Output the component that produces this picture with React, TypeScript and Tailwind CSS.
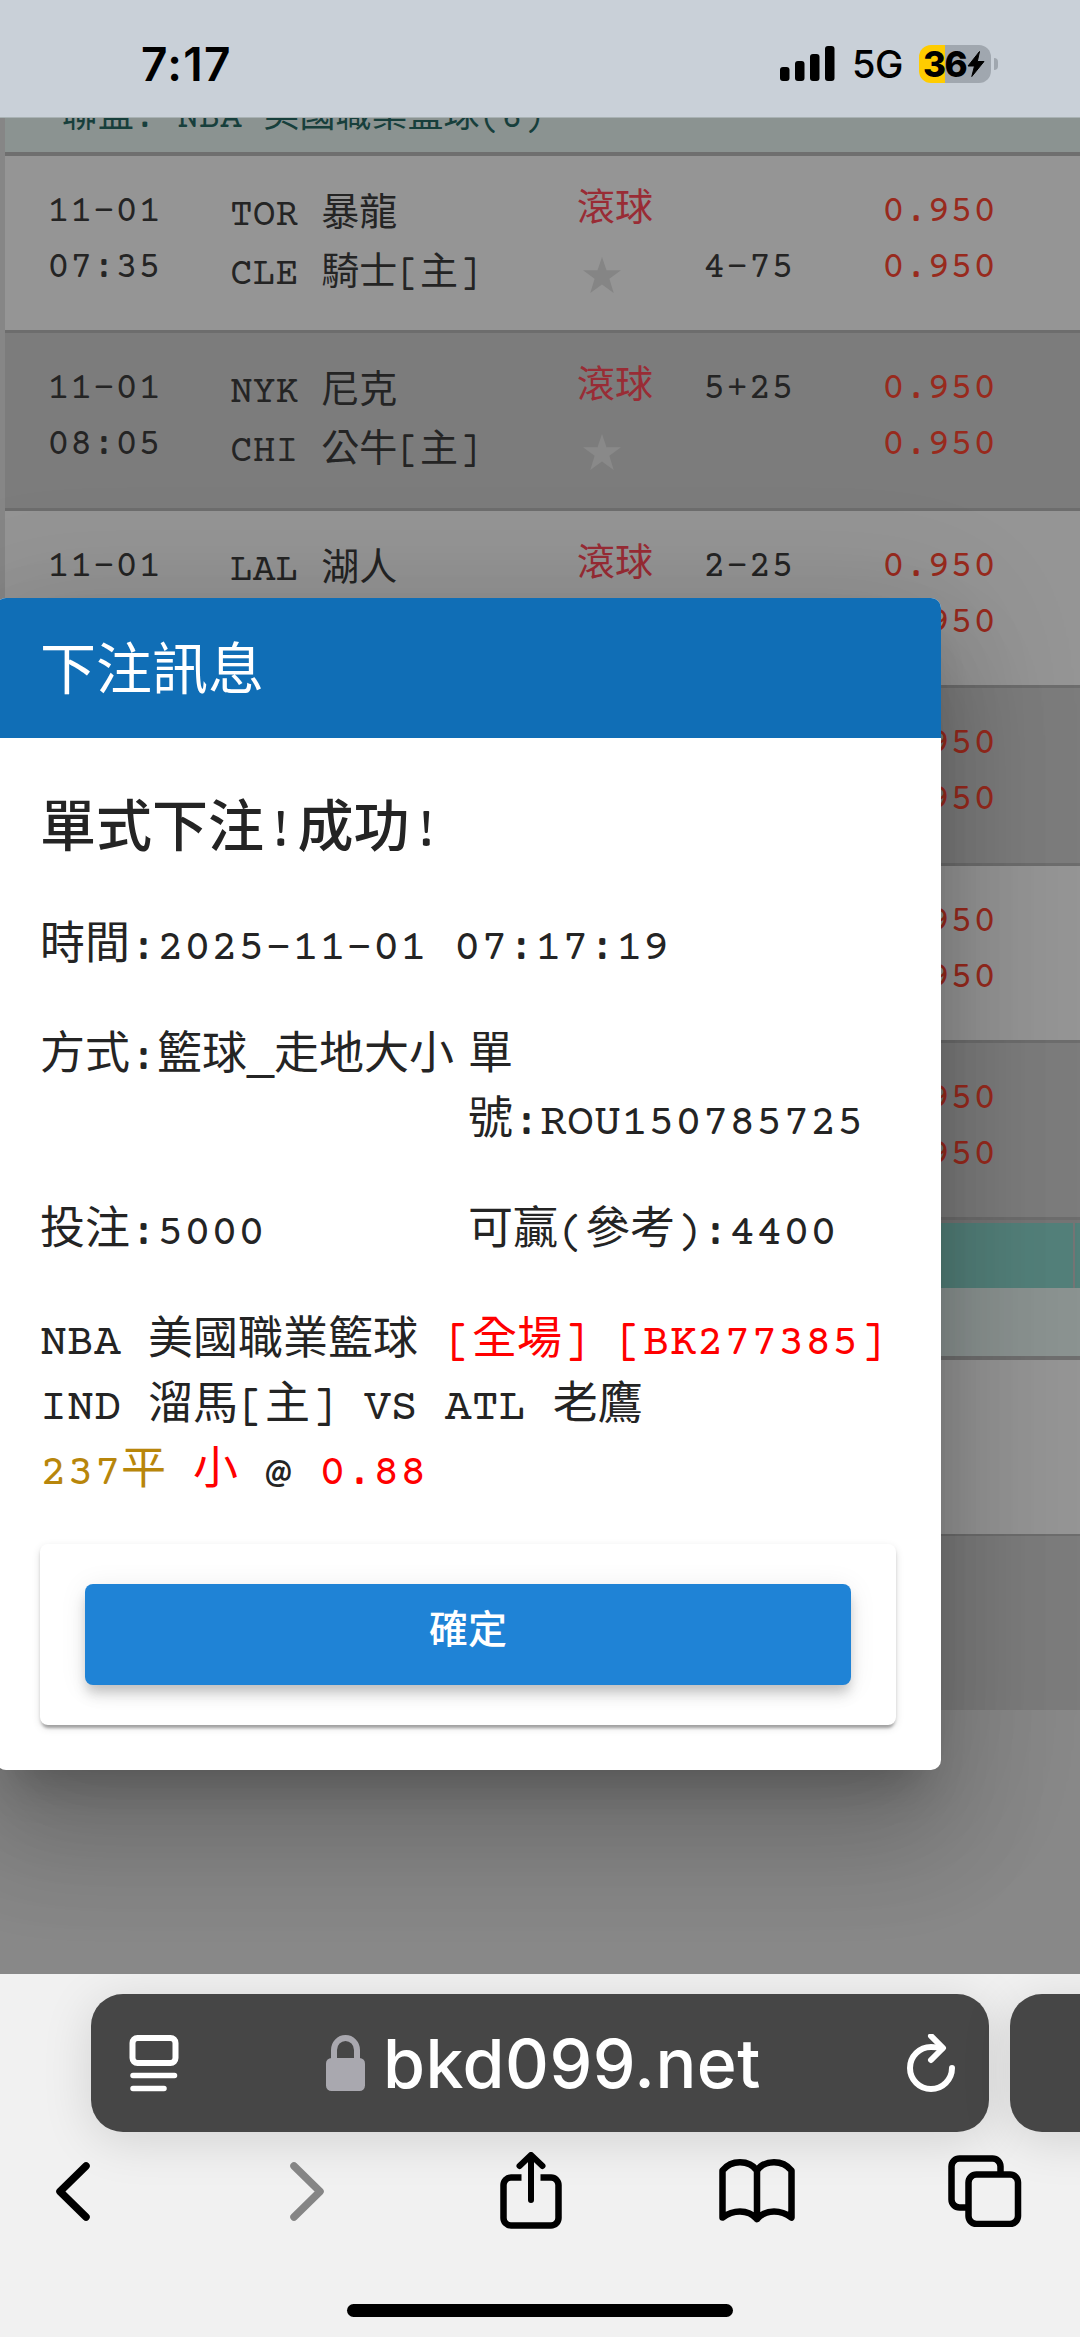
import clsx from "clsx";

type Game = {
  date: string;
  time: string;
  away: string;
  home: string;
  line: string;
  lineOnHome?: boolean;
};

const games: Game[] = [
  { date: "11-01", time: "07:35", away: "TOR 暴龍", home: "CLE 騎士[主]", line: "4-75", lineOnHome: true },
  { date: "11-01", time: "08:05", away: "NYK 尼克", home: "CHI 公牛[主]", line: "5+25" },
  { date: "11-01", time: "", away: "LAL 湖人", home: "", line: "2-25" },
  { date: "", time: "", away: "", home: "", line: "" },
  { date: "", time: "", away: "", home: "", line: "" },
  { date: "", time: "", away: "", home: "", line: "" },
];

const StatusBar = () => {
  return (
    <header className="flex h-[118px] shrink-0 items-start justify-between border-b border-[#a9b2b4] bg-[#c9d0d8] pr-[82px] pl-[141px] font-['Inter',sans-serif] text-black">
      <div className="pt-[36px] text-[46px] leading-[56px] font-semibold tracking-[1.3px]">
        7:17
      </div>
      <div className="mt-[45px] flex h-[38px] items-center">
        <svg className="h-[36px] w-[56px]" viewBox="0 0 56 36">
          <rect x="0" y="21" width="9.5" height="14" rx="3" />
          <rect x="15" y="15" width="9.5" height="20" rx="3" />
          <rect x="30" y="8" width="9.5" height="27" rx="3" />
          <rect x="45" y="0" width="9.5" height="35" rx="3" />
        </svg>
        <span className="ml-[16px] w-[53px] text-[38px] leading-[38px] font-medium tracking-[-0.5px]">
          5G
        </span>
        <div className="ml-[14px] flex h-[38px] w-[72px] items-center rounded-[12px] bg-linear-to-r from-[#ffcc00] from-36% to-[#a0a7af] to-36% pl-[4px]">
          <span className="text-[35px] leading-[38px] font-extrabold tracking-[-1.5px]">
            36
          </span>
          <svg className="ml-px h-[26px] w-[18px] shrink-0" viewBox="0 0 18 26">
            <path
              d="M12.5 0.5 1 15h6.5L4.8 25.5 17 10.5h-6.7z"
              stroke="black"
              strokeLinejoin="round"
            />
          </svg>
        </div>
        <span className="ml-[3px] h-[12px] w-[4px] rounded-r-full bg-[#a0a7af]" />
      </div>
    </header>
  );
};

const GameRow = ({ game, dark }: { game: Game; dark: boolean }) => {
  return (
    <div
      className={clsx(
        "flex h-[177.4px] border-b-[3px] border-[#6d6d6d] pl-[42px]",
        dark ? "bg-[#7c7c7c]" : "bg-[#959595]",
      )}
    >
      <div className="w-[183px] pt-[29px] leading-[56px]">
        <p>{game.date}</p>
        <p>{game.time}</p>
      </div>
      <div className="w-[347px] pt-[31px] leading-[59px]">
        <p>{game.away}</p>
        <p>{game.home}</p>
      </div>
      <div className="w-[126px] pt-[28px] leading-[56px] text-[#992c35]">
        <p>{game.away && "滾球"}</p>
        {game.home && (
          <svg className="mt-[17px] ml-[6px] h-[36px] w-[38px]" viewBox="0 0 38 36">
            <path
              d="M19 0l4.500 13.300H38L26.400 21.800 30.700 36 19 27.400 7.300 36l4.300-14.200L0 13.300h14.500z"
              fill={dark ? "#898989" : "#858585"}
            />
          </svg>
        )}
      </div>
      <div className="w-[179px] pt-[29px] leading-[56px]">
        {game.lineOnHome && <p>&nbsp;</p>}
        <p>{game.line}</p>
      </div>
      <div className="pt-[29px] leading-[56px] text-[#982a1d]">
        <p>0.950</p>
        <p>0.950</p>
      </div>
    </div>
  );
};

const OddsTable = () => {
  return (
    <div className="border-l-[5px] border-[#868686] text-[38px] whitespace-nowrap text-[#242424]">
      <div className="flex h-[38px] items-end overflow-hidden border-b-[4px] border-[#6f6f6f] bg-[#8b9391] pb-[5px] pl-[57px] text-[36px] leading-[56px] text-[#173f3c]">
        <span>聯盟: NBA 美國職業籃球(6)</span>
      </div>
      {games.map((game, i) => (
        <GameRow key={i} game={game} dark={i % 2 === 1} />
      ))}
      <div className="h-[3px] bg-[#757575]" />
      <div className="flex h-[65px] gap-[2px] bg-[#757575]">
        <div className="w-[1068px] bg-[#53807a]" />
        <div className="flex-1 bg-[#53807a]" />
      </div>
      <div className="h-[72px] border-b-[4px] border-[#6f6f6f] bg-[#8b9391]" />
      <div className="h-[176px] border-b-[2px] border-[#6d6d6d] bg-[#959595]" />
      <div className="h-[174px] bg-[#7c7c7c]" />
    </div>
  );
};

const BetDialog = () => {
  return (
    <div className="absolute top-[480px] -left-[4px] w-[945px] overflow-hidden rounded-[10px] bg-white shadow-[0_31px_42px_-20px_rgba(0,0,0,0.2),0_67px_106px_8px_rgba(0,0,0,0.14),0_25px_129px_22px_rgba(0,0,0,0.12)]">
      <h2 className="flex h-[140px] items-center bg-[#106eb6] pt-[17px] pl-[44px] text-[56px] text-white">
        下注訊息
      </h2>
      <div className="pt-[51px] pr-[45px] pb-[45px] pl-[44px] text-[45px] leading-[65px] text-[#242424]">
        <h3 className="mb-[38px] text-[56px] leading-[90px] font-medium">單式下注!成功!</h3>
        <p className="mb-[45px]">時間:2025-11-01 07:17:19</p>
        <div className="mb-[45px] grid grid-cols-2">
          <p className="whitespace-nowrap">方式:籃球_走地大小</p>
          <p className="whitespace-nowrap">
            單
            <br />
            號:ROU150785725
          </p>
        </div>
        <div className="mb-[45px] grid grid-cols-2">
          <p>投注:5000</p>
          <p>可贏(參考):4400</p>
        </div>
        <p className="whitespace-nowrap">
          NBA 美國職業籃球 <span className="text-[#ff0000]">[全場] [BK277385]</span>
        </p>
        <p>IND 溜馬[主] VS ATL 老鷹</p>
        <p>
          <span className="text-[#b8860b]">237平</span> <span className="text-[#ff0000]">小</span> @{" "}
          <span className="text-[#ff0000]">0.88</span>
        </p>
        <div className="mt-[37px] rounded-[8px] px-[45px] py-[40px] shadow-[0_6px_3px_-3px_rgba(0,0,0,0.2),0_3px_3px_0_rgba(0,0,0,0.14),0_3px_8px_0_rgba(0,0,0,0.12)]">
          <button className="block h-[101px] w-full rounded-[8px] bg-[#1f83d6] text-[39px] leading-[65px] font-medium text-white shadow-[0_8px_11px_-3px_rgba(0,0,0,0.13),0_11px_14px_0_rgba(0,0,0,0.1),0_3px_28px_0_rgba(0,0,0,0.08)]">
            確定
          </button>
        </div>
      </div>
    </div>
  );
};

const BrowserBar = () => {
  return (
    <footer className="relative h-[363px] shrink-0 overflow-hidden bg-[#f1f1f1] pt-[20px]">
      <div className="flex gap-[21px] pl-[91px]">
        <div className="flex h-[138px] w-[898px] shrink-0 items-center rounded-[32px] bg-[#464646] pl-[38px] shadow-[0_8px_50px_rgba(0,0,0,0.13)]">
          <svg className="h-[58px] w-[50px]" viewBox="0 0 50 58" fill="none" stroke="white" strokeWidth="6" strokeLinecap="round">
            <rect x="3.500" y="4" width="43" height="25" rx="5" />
            <path d="M4 41.500h41.500M4 54.500h31" strokeWidth="5.500" />
          </svg>
          <svg className="mr-[18px] ml-[147px] h-[56px] w-[39px]" viewBox="0 0 39 56">
            <path d="M8 26V15a11.500 12 0 0 1 23 0v11" fill="none" stroke="#a9a8af" strokeWidth="6" />
            <rect x="0" y="23" width="39" height="33" rx="5.500" fill="#a9a8af" />
          </svg>
          <span className="w-[376px] font-['Inter',sans-serif] text-[68px] leading-[80px] font-medium tracking-[0.5px] text-white">
            bkd099.net
          </span>
          <svg className="ml-[148px] h-[58px] w-[50px]" viewBox="0 0 50 58" fill="none" stroke="white" strokeWidth="6" strokeLinecap="round" strokeLinejoin="round">
            <path d="M45 34A21 21 0 1 1 24 13c4 0 8 .5 11 1.500" />
            <path d="M24 2l12 12-12 12" />
          </svg>
        </div>
        <div className="h-[138px] w-[200px] shrink-0 rounded-[32px] bg-[#464646] shadow-[0_8px_50px_rgba(0,0,0,0.13)]" />
      </div>
      <nav className="relative grid h-[118px] grid-cols-[228px_228px_228px_228px_228px] items-center justify-items-center -ml-[41px]">
        <svg className="h-[60px] w-[36px]" viewBox="0 0 36 60" fill="none" stroke="black" strokeWidth="7.500" strokeLinecap="round" strokeLinejoin="round">
          <path d="M31 5 5 30.500 31 56" />
        </svg>
        <svg className="ml-3 h-[60px] w-[36px]" viewBox="0 0 36 60" fill="none" stroke="#858585" strokeWidth="7.500" strokeLinecap="round" strokeLinejoin="round">
          <path d="M5 5 31 30.500 5 56" />
        </svg>
        <svg className="ml-1 h-[78px] w-[62px]" viewBox="0 0 62 78" fill="none" stroke="black" strokeWidth="6.500" strokeLinecap="round" strokeLinejoin="round">
          <path d="M21.500 25.500H11a7.500 7.500 0 0 0-7.500 7.500v33a7.500 7.500 0 0 0 7.500 7.500h40a7.500 7.500 0 0 0 7.500-7.500V33a7.500 7.500 0 0 0-7.500-7.500H40.500" strokeLinecap="butt" />
          <path d="M31 48V4M19.500 14 31 3l11.500 11" strokeWidth="6" />
        </svg>
        <svg className="h-[64px] w-[76px]" viewBox="0 0 76 64" fill="none" stroke="black" strokeWidth="6.500" strokeLinecap="round" strokeLinejoin="round">
          <path d="M38 11.500C34 6 28 3.300 21 3.300S8 6 3.500 11.500v47C9 54.500 15 52.500 21 52.500s12.500 2.500 17 7.500c4.500-5 11-7.500 17-7.500s12 2 17.500 6v-47C68 6 62 3.300 55 3.300S42 6 38 11.500zV60" />
        </svg>
        <svg className="h-[72px] w-[74px]" viewBox="0 0 74 72" fill="none" stroke="black" strokeWidth="6.500">
          <path d="M52.500 17v-5.500a8 8 0 0 0-8-8h-33a8 8 0 0 0-8 8v33a8 8 0 0 0 8 8h7" />
          <rect x="20.500" y="19.500" width="49.500" height="49.500" rx="8" />
        </svg>
      </nav>
      <div className="mx-auto mt-[54px] h-[13px] w-[386px] rounded-full bg-black" />
    </footer>
  );
};

const App = () => {
  return (
    <div className="flex h-[2337px] w-[1080px] flex-col overflow-hidden bg-[#888888] font-['Courier_Prime','Liberation_Mono','Noto_Sans_CJK_TC',monospace]">
      <StatusBar />
      <main className="relative flex-1 overflow-hidden">
        <OddsTable />
        <BetDialog />
      </main>
      <BrowserBar />
    </div>
  );
};

export default App;
